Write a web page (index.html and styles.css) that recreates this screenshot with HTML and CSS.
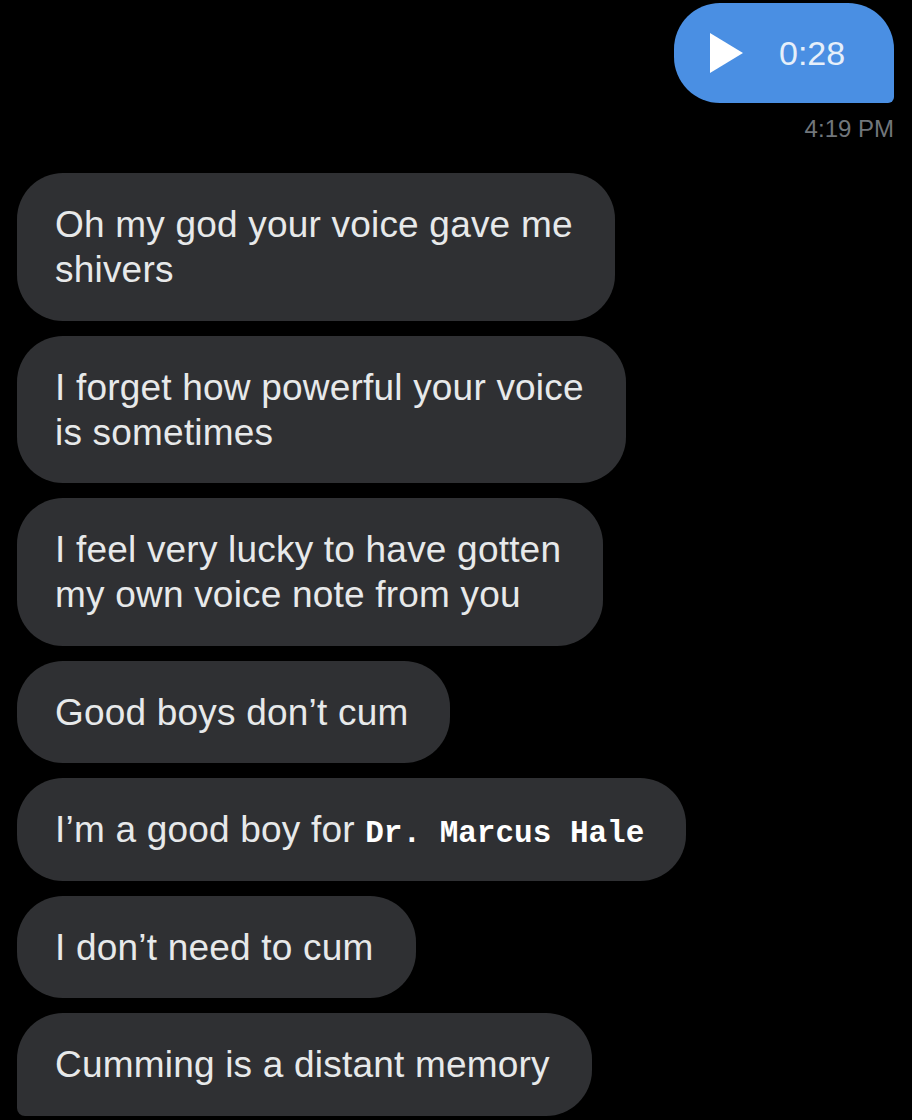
FILE: index.html
```html
<!DOCTYPE html>
<html lang="en">
<head>
    <meta charset="UTF-8">
    <meta name="viewport" content="width=device-width, initial-scale=1.0">
    <title>Messages</title>
    <link rel="stylesheet" href="styles.css">
</head>
<body>
    <div class="chat">
        <div class="sent">
            <div class="voice">
                <svg class="play" width="33" height="40" viewBox="0 0 33 40">
                    <path d="M0 0 L33 20 L0 40 Z" fill="#fff"/>
                </svg>
                <span class="duration">0:28</span>
            </div>
            <div class="time">4:19 PM</div>
        </div>

        <div class="received">
            <div class="bubble">Oh my god your voice gave me<br>shivers</div>
            <div class="bubble">I forget how powerful your voice<br>is sometimes</div>
            <div class="bubble">I feel very lucky to have gotten<br>my own voice note from you</div>
            <div class="bubble">Good boys don’t cum</div>
            <div class="bubble">I’m a good boy for <span class="mono">Dr. Marcus Hale</span></div>
            <div class="bubble">I don’t need to cum</div>
            <div class="bubble last">Cumming is a distant memory</div>
        </div>
    </div>
</body>
</html>
```

FILE: styles.css
```css
*{
    margin: 0;
    padding: 0;
    box-sizing: border-box;
}

body{
    background-color: #000;
    font-family: "Liberation Sans", Arial, sans-serif;
    color: #e7e9ea;
}

.chat{
    display: flex;
    flex-direction: column;
    padding: 3px 18px 0 17px;
}

.sent{
    display: flex;
    flex-direction: column;
    align-items: flex-end;
}

.voice{
    display: flex;
    align-items: center;
    width: 220px;
    height: 100px;
    padding-left: 36px;
    background-color: #4a8fe3;
    border-radius: 46px 46px 6px 46px;
}

.duration{
    margin-left: 36px;
    font-size: 34px;
    color: #e6effa;
}

.time{
    margin-top: 12px;
    font-size: 24px;
    line-height: 28px;
    color: #71767b;
}

.received{
    display: flex;
    flex-direction: column;
    align-items: flex-start;
    gap: 15px;
    margin-top: 30px;
}

.bubble{
    background-color: #2f3033;
    border-radius: 46px;
    padding: 29px 42px 28.5px 38px;
    font-size: 37px;
    line-height: 45px;
    letter-spacing: 0.2px;
}

.bubble.last{
    border-bottom-left-radius: 8px;
}

.mono{
    font-family: "Liberation Mono", monospace;
    font-size: 31px;
    line-height: 1;
    font-weight: bold;
    letter-spacing: 0;
    color: #fff;
}
```
